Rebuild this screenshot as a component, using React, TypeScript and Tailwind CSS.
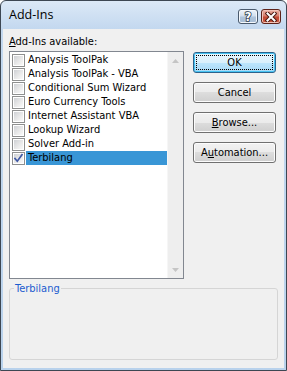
import React from "react";

const F = "font-['DejaVu_Sans_Condensed',sans-serif] text-[11px]";

function Check({ checked }: { checked?: boolean }) {
  return (
    <div className="relative w-[13px] h-[13px] shrink-0 border border-[#8e8f8f] bg-white">
      <div className="absolute inset-[1px] bg-[linear-gradient(135deg,#cfd1d5_0%,#ebebeb_60%,#f9f9f9_100%)]" />
      {checked && (
        <svg className="absolute left-0 top-0" width="11" height="11" viewBox="0 0 11 11">
          <path d="M2 5.5 L4.3 8.2 L9 1.8" stroke="#3f58a4" strokeWidth="1.7" fill="none" strokeLinecap="square" />
        </svg>
      )}
    </div>
  );
}

const items = [
  "Analysis ToolPak",
  "Analysis ToolPak - VBA",
  "Conditional Sum Wizard",
  "Euro Currency Tools",
  "Internet Assistant VBA",
  "Lookup Wizard",
  "Solver Add-in",
  "Terbilang",
];

function Btn({ children, def }: { children: React.ReactNode; def?: boolean }) {
  return (
    <div
      className={
        "relative w-[83px] h-[21px] rounded-[3px] border flex items-center justify-center text-black " +
        F +
        (def
          ? " border-[#2c628b] shadow-[inset_0_0_0_1px_#46c3f2] bg-[linear-gradient(to_bottom,#eaf6fd_0%,#d9f0fc_50%,#bee6fd_50%,#a7d9f5_100%)]"
          : " border-[#707070] shadow-[inset_0_0_0_1px_#fcfcfc] bg-[linear-gradient(to_bottom,#f2f2f2_0%,#ebebeb_50%,#dddddd_50%,#cfcfcf_100%)]")
      }
    >
      {def && <div className="absolute inset-[2px] border border-dotted border-black" />}
      <span className="leading-[13px]">{children}</span>
    </div>
  );
}

export default function App() {
  return (
    <div className="w-[287px] h-[371px] border border-[#3d4753] rounded-t-[6px] bg-[linear-gradient(to_bottom,#dce9f7_0px,#c3d8ef_28px,#b9d2ec_100%)] flex flex-col overflow-hidden">
      <div className="h-[28px] flex items-center pl-[8px] pr-[5px] shrink-0">
        <span className="font-['Open_Sans',sans-serif] text-[12.5px] text-black leading-[14px] flex-1">Add-Ins</span>
        <div className="flex gap-[3px] self-start mt-[8px]">
          <div className="w-[20px] h-[15px] rounded-[3px] border border-[#4a5a6d] bg-[linear-gradient(to_bottom,#eef3f9_0%,#d3e0ee_45%,#b0c4da_55%,#a7bdd6_100%)] shadow-[inset_0_0_0_1px_#f4f8fc] flex items-center justify-center">
            <svg width="18" height="13" viewBox="0 0 18 13">
              <text x="9" y="11" textAnchor="middle" fontFamily="DejaVu Sans, sans-serif" fontWeight="bold" fontSize="11.5" fill="#ffffff" stroke="#2d3a4a" strokeWidth="1.6" paintOrder="stroke">?</text>
            </svg>
          </div>
          <div className="w-[20px] h-[15px] rounded-[3px] border border-[#5e231a] bg-[linear-gradient(to_bottom,#eab1a4_0%,#d77d6c_45%,#c24a34_55%,#c8563f_100%)] shadow-[inset_0_0_0_1px_#f0c3b8] flex items-center justify-center">
            <svg width="12" height="10" viewBox="0 0 12 10">
              <path d="M2.5 1.5 L9.5 8.5 M9.5 1.5 L2.5 8.5" stroke="#4a1810" strokeWidth="4" strokeLinecap="square" />
              <path d="M2.5 1.5 L9.5 8.5 M9.5 1.5 L2.5 8.5" stroke="#ffffff" strokeWidth="2" strokeLinecap="square" />
            </svg>
          </div>
        </div>
      </div>
      <div className="mx-[2px] mb-[2px] flex-1 bg-[#f0f0f0] pl-[6px] pt-[6px] flex flex-col">
        <div className="flex">
          <div className="flex flex-col">
            <div className={F + " leading-[14px] h-[14px] text-black"}>
              <span className="underline">A</span>dd-Ins available:
            </div>
            <div className="mt-[2px] w-[175px] h-[228px] border border-[#828790] bg-white flex">
              <div className="flex-1 pt-[1px] flex flex-col">
                {items.map((t, i) => {
                  const sel = i === items.length - 1;
                  return (
                    <div key={t} className="h-[14px] flex items-center">
                      <div className="ml-[2px] mr-[1px]">
                        <Check checked={sel} />
                      </div>
                      <div
                        className={
                          F +
                          " flex-1 h-[14px] leading-[14px] pl-[2px] text-black whitespace-nowrap" +
                          (sel ? " bg-[#3996d6]" : "")
                        }
                      >
                        {t}
                      </div>
                    </div>
                  );
                })}
              </div>
              <div className="w-[16px] bg-[#eeeeee] border-l border-[#f6f6f6] flex flex-col justify-between">
                <div className="h-[17px] flex items-center justify-center">
                  <svg width="7" height="4" viewBox="0 0 7 4">
                    <path d="M3.5 0 L7 4 L0 4 Z" fill="#c5c5c5" />
                  </svg>
                </div>
                <div className="h-[17px] flex items-center justify-center">
                  <svg width="7" height="4" viewBox="0 0 7 4">
                    <path d="M0 0 L7 0 L3.5 4 Z" fill="#c5c5c5" />
                  </svg>
                </div>
              </div>
            </div>
          </div>
          <div className="ml-[9px] pt-[17px] flex flex-col gap-[9px]">
            <Btn def>OK</Btn>
            <Btn>Cancel</Btn>
            <Btn>
              <span className="underline">B</span>rowse...
            </Btn>
            <Btn>
              A<span className="underline">u</span>tomation...
            </Btn>
          </div>
        </div>
        <fieldset className="mt-[3px] w-[269px] h-[78px] border border-[#d5d5d5] rounded-[3px] p-0 m-0">
          <legend className={F + " ml-[4px] px-[1px] leading-[13px] text-[#1c5ccf]"}>Terbilang</legend>
        </fieldset>
      </div>
    </div>
  );
}
